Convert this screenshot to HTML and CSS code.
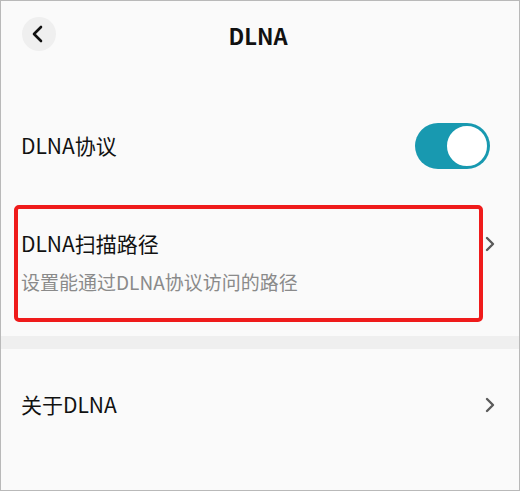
FILE: index.html
```html
<!DOCTYPE html>
<html lang="zh-CN">
<head>
<meta charset="utf-8">
<title>DLNA</title>
<link rel="stylesheet" href="styles.css">
</head>
<body>
<div class="screen">
  <header class="topbar">
    <button class="back" aria-label="返回">
      <svg width="14" height="18" viewBox="0 0 14 18"><path d="M10 2 L3 9 L10 16" fill="none" stroke="#111" stroke-width="2.6" stroke-linecap="round" stroke-linejoin="round"/></svg>
    </button>
    <h1 class="title">DLNA</h1>
  </header>

  <div class="row row-switch">
    <span class="label">DLNA协议</span>
    <span class="toggle"><span class="knob"></span></span>
  </div>

  <div class="row row-path">
    <div class="texts">
      <span class="label">DLNA扫描路径</span>
      <span class="sub">设置能通过DLNA协议访问的路径</span>
    </div>
    <svg class="chev" width="10" height="16" viewBox="0 0 10 16"><path d="M2 2 L8 8 L2 14" fill="none" stroke="#5a5a5a" stroke-width="2.4" stroke-linecap="round" stroke-linejoin="round"/></svg>
    <div class="highlight"></div>
  </div>

  <div class="divider"></div>

  <div class="row row-about">
    <span class="label">关于DLNA</span>
    <svg class="chev" width="10" height="16" viewBox="0 0 10 16"><path d="M2 2 L8 8 L2 14" fill="none" stroke="#5a5a5a" stroke-width="2.4" stroke-linecap="round" stroke-linejoin="round"/></svg>
  </div>
</div>
</body>
</html>
```

FILE: styles.css
```css
* { box-sizing: border-box; }
html, body { margin: 0; padding: 0; }
body {
  font-family: "Noto Sans CJK SC", "Noto Sans", sans-serif;
  background: #fafafa;
}
.screen {
  width: 520px;
  height: 491px;
  border: 1px solid #b9b9b9;
  background: #fafafa;
  display: flex;
  flex-direction: column;
  overflow: hidden;
}
.topbar {
  position: relative;
  height: 70px;
  display: flex;
  align-items: center;
  justify-content: center;
}
.back {
  position: absolute;
  left: 21px;
  top: 16px;
  width: 34px;
  height: 34px;
  border-radius: 50%;
  border: none;
  background: #efefef;
  display: flex;
  align-items: center;
  justify-content: center;
  padding: 0 2px 0 0;
}
.title {
  margin: 0 4px 0 0;
  font-size: 22px;
  font-weight: 700;
  color: #111;
  line-height: 1;
  transform: translateY(-1px);
}
.row {
  display: flex;
  align-items: center;
  justify-content: space-between;
  padding: 0 24px 0 20px;
}
.label {
  font-size: 21px;
  font-weight: 400;
  color: #111;
  line-height: 1;
}
.row-switch {
  height: 134px;
  padding-top: 52px;
  padding-bottom: 36px;
  padding-right: 29px;
  align-items: flex-start;
}
.row-switch .label { margin-top: 12px; }
.toggle {
  width: 75px;
  height: 46px;
  border-radius: 23px;
  background: #1899b0;
  display: flex;
  justify-content: flex-end;
  align-items: center;
  padding-right: 1px;
}
.knob {
  width: 44px;
  height: 44px;
  border-radius: 50%;
  background: #fff;
  border: 2px solid #1899b0;
}
.row-path {
  position: relative;
  height: 131px;
  align-items: flex-start;
  padding-top: 28px;
}
.texts {
  display: flex;
  flex-direction: column;
  gap: 18px;
}
.sub {
  font-size: 19px;
  color: #8a8a8a;
  line-height: 1;
}
.row-path .chev { margin-top: 3px; }
.highlight {
  position: absolute;
  left: 13px;
  top: 0;
  width: 469px;
  height: 117px;
  border: 4px solid #ef1b1b;
  border-radius: 5px;
}
.divider {
  height: 13px;
  background: #efefef;
}
.row-about {
  flex: 1;
  align-items: flex-start;
  padding-top: 45px;
}
.row-about .chev { margin-top: 3px; }
```
